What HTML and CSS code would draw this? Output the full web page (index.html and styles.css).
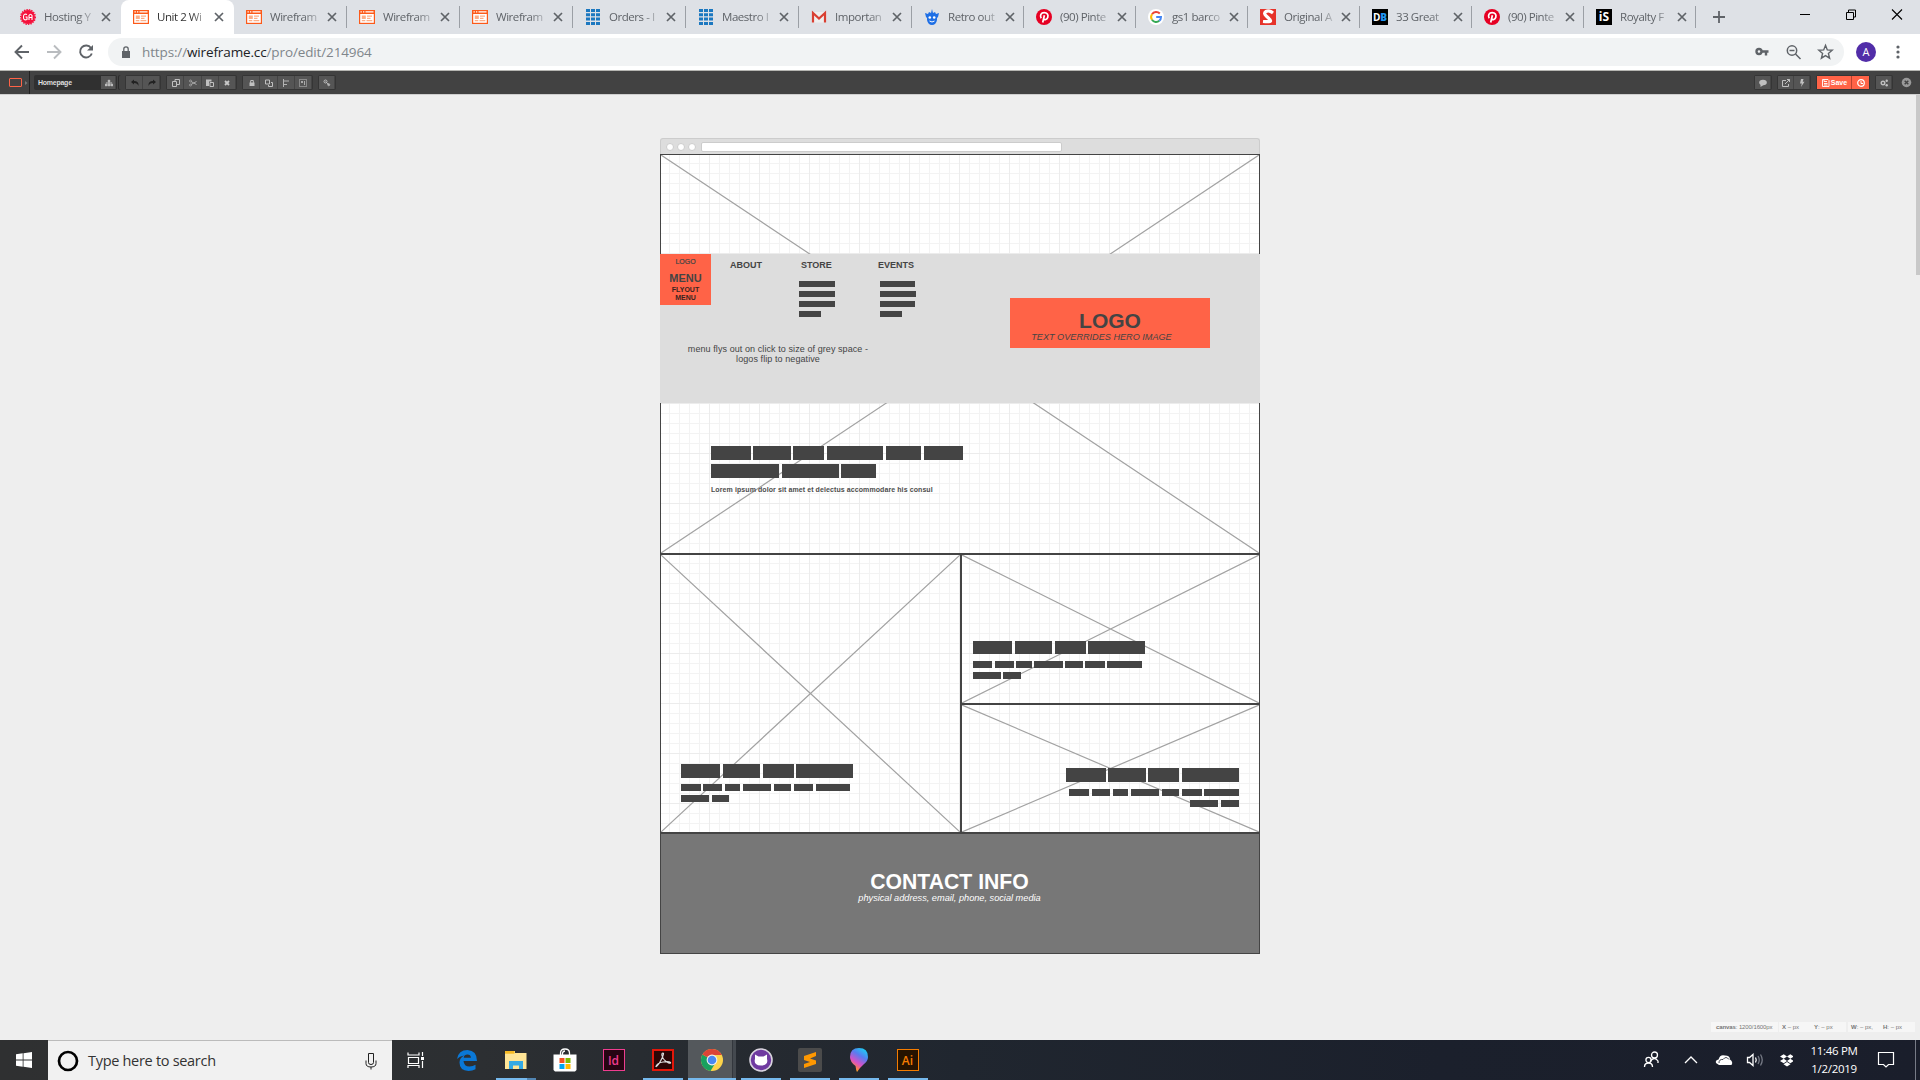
FILE: index.html
```html
<!DOCTYPE html>
<html lang="en">
<head>
<meta charset="utf-8">
<title>Unit 2 Wireframe</title>
<link rel="stylesheet" href="styles.css">
</head>
<body>
<svg class="defs" width="0" height="0">
  <symbol id="x" viewBox="0 0 10 10"><path d="M1 1L9 9M9 1L1 9" stroke="#5f6368" stroke-width="1.7"/></symbol>
  <symbol id="wf" viewBox="0 0 16 16"><path d="M0 1h16v14H0z" fill="#fc5a1a"/><path d="M1.200 5h13.600v8.800H1.200z" fill="#fff"/><path d="M1.500 2.300h1.300v1.300H1.500zM4 2.300h1.300v1.300H4zM6.500 2.300h8v1.300h-8z" fill="#fff"/><path d="M2.800 6.500h4v3.500h-4zM8 6.500h5v1.200H8zM8 8.800h3.500V10H8zM2.800 11h3.500v1.200H2.800zM7.500 11h5.800v1.200H7.500z" fill="#fcae88"/></symbol>
  <symbol id="grid" viewBox="0 0 14 16"><path d="M0 0h4v3H0zM5 0h4v3H5zM10 0h4v3h-4zM0 4.300h4v3H0zM5 4.300h4v3H5zM10 4.300h4v3h-4zM0 8.600h4v3H0zM5 8.600h4v3H5zM10 8.600h4v3h-4zM0 12.900h4v3H0zM5 12.900h4v3H5zM10 12.900h4v3h-4z" fill="#1c78c0"/></symbol>
  <symbol id="pin" viewBox="0 0 16 16"><circle cx="8" cy="8" r="8" fill="#e60023"/><path d="M5.200 9.200C3.600 6.600 5 3.700 8.200 3.700c3 0 4.300 2.100 3.600 4.600-.6 2.300-3.300 3-4.200 1.500M8.400 6.200L6.700 13.500" fill="none" stroke="#fff" stroke-width="1.700"/></symbol>
</svg>

<div class="tabs">
  <div class="tab w113"><svg class="fav" viewBox="0 0 16 16"><circle cx="8" cy="8" r="7" fill="#f5123c"/><circle cx="8" cy="8" r="7.300" fill="none" stroke="#f5123c" stroke-width="1.400" stroke-dasharray="1.500 1"/><path d="M7 5.500Q3.500 4 3.500 8t3.500 2.500V8H5.500M9 11V6.500q1.500-2.500 3 0V11M9 8.500h3" fill="none" stroke="#fff" stroke-width="1.100"/></svg><span class="title">Hosting Y</span><svg class="x"><use href="#x"/></svg></div>
  <div class="tab w113 active"><svg class="fav"><use href="#wf"/></svg><span class="title">Unit 2 Wi</span><svg class="x"><use href="#x"/></svg></div>
  <div class="tab w113 sep"><svg class="fav"><use href="#wf"/></svg><span class="title">Wirefram</span><svg class="x"><use href="#x"/></svg></div>
  <div class="tab w113 sep"><svg class="fav"><use href="#wf"/></svg><span class="title">Wirefram</span><svg class="x"><use href="#x"/></svg></div>
  <div class="tab w113 sep"><svg class="fav"><use href="#wf"/></svg><span class="title">Wirefram</span><svg class="x"><use href="#x"/></svg></div>
  <div class="tab w113 sep"><svg class="fav"><use href="#grid"/></svg><span class="title">Orders - I</span><svg class="x"><use href="#x"/></svg></div>
  <div class="tab w113 sep"><svg class="fav"><use href="#grid"/></svg><span class="title">Maestro I</span><svg class="x"><use href="#x"/></svg></div>
  <div class="tab w113 sep"><svg class="fav" viewBox="0 0 16 16"><path d="M1 3h14v10.500H1z" fill="#eee"/><path d="M2 13.500V4l6 5.500L14 4v9.500" fill="none" stroke="#d93f32" stroke-width="2.200"/></svg><span class="title">Importan</span><svg class="x"><use href="#x"/></svg></div>
  <div class="tab sep"><svg class="fav" viewBox="0 0 16 16"><path d="M1 4l3 1 1-2 2 1 1-4 1 4 2-1 1 2 3-1-1 4-1 1v2q-1 5-5 5t-5-5V9L2 8z" fill="#1f6fe5"/><circle cx="5.800" cy="8.500" r="1.300" fill="#fff"/><circle cx="10.200" cy="8.500" r="1.300" fill="#fff"/><path d="M5.500 12q2.500 2 5 0" fill="none" stroke="#fff"/></svg><span class="title">Retro out</span><svg class="x"><use href="#x"/></svg></div>
  <div class="tab sep"><svg class="fav"><use href="#pin"/></svg><span class="title">(90) Pinte</span><svg class="x"><use href="#x"/></svg></div>
  <div class="tab sep"><svg class="fav" viewBox="0 0 16 16"><circle cx="8" cy="8" r="8" fill="#fff"/><g fill="none" stroke-width="2"><path d="M4 5.200A5 5 0 0 1 11.800 4.500" stroke="#ea4335"/><path d="M4 5.200a5 5 0 0 0 0 5.600" stroke="#fbbc05"/><path d="M4 10.800a5 5 0 0 0 7.300 1" stroke="#34a853"/><path d="M11.300 11.800Q13 10.300 13 8H8.200" stroke="#4285f4"/></g></svg><span class="title">gs1 barco</span><svg class="x"><use href="#x"/></svg></div>
  <div class="tab sep"><svg class="fav" viewBox="0 0 16 16"><path d="M0 0h16v16H0z" fill="#e6332a"/><path d="M13 4Q9 .800 6 2.500T6.500 7.200t4 4.500T3 12.500" fill="none" stroke="#fff" stroke-width="3.200"/></svg><span class="title">Original A</span><svg class="x"><use href="#x"/></svg></div>
  <div class="tab sep"><span class="fav badge">D<b>B</b></span><span class="title">33 Great</span><svg class="x"><use href="#x"/></svg></div>
  <div class="tab sep"><svg class="fav"><use href="#pin"/></svg><span class="title">(90) Pinte</span><svg class="x"><use href="#x"/></svg></div>
  <div class="tab sep"><span class="fav badge is">iS</span><span class="title">Royalty F</span><svg class="x"><use href="#x"/></svg></div>
  <svg class="plus" viewBox="0 0 12 12"><path d="M6 0v12M0 6h12" stroke="#5f6368" stroke-width="1.800"/></svg>
  <svg class="winctl" viewBox="0 0 104 12"><path d="M0 6.500h10" stroke="#000"/><path d="M46.500 4.500h7v7h-7zM48.500 4.500v-2.500h7v7h-2" fill="none" stroke="#000"/><path d="M92 1.500l10 10M102 1.500l-10 10" stroke="#000" stroke-width="1.100"/></svg>
</div>

<div class="nav">
  <svg class="navicons" viewBox="0 0 108 36" fill="none" stroke-width="1.900"><path d="M29 18H16M22 11.500L15.500 18l6.500 6.500" stroke="#5f6368"/><path d="M47 18h13M54 11.500l6.500 6.500-6.500 6.500" stroke="#b9bcbf"/><path d="M91 14a6 6 0 1 0 .800 5.500" stroke="#5f6368"/><path d="M93 11v5.500h-6z" fill="#5f6368"/></svg>
  <div class="omni">
    <svg class="lock" viewBox="0 0 10 12"><path d="M1 5h8v7H1z" fill="#5f6368"/><path d="M2.800 5V3q0-2.200 2.200-2.200T7.200 3v2" fill="none" stroke="#5f6368" stroke-width="1.300"/></svg>
    <span class="url">https://<b>wireframe.cc</b>/pro/edit/214964</span>
    <svg class="omniicons" viewBox="0 0 90 28" fill="none" stroke="#5f6368" stroke-width="1.500"><circle cx="5" cy="13.500" r="2.500" stroke-width="2.400"/><path d="M8 13.500h6.500M12 13.500v4" stroke-width="2.400"/><circle cx="38" cy="12.500" r="4.700"/><path d="M41.500 16l5 5M35.500 12.500h5"/><path d="M71.500 7.300l1.800 4.600 4.900.300-3.800 3.200 1.200 4.800-4.100-2.600-4.100 2.600 1.200-4.800-3.800-3.200 4.900-.300z" stroke-width="1.400"/></svg>
  </div>
  <span class="avatar">A</span>
  <svg class="dots" viewBox="0 0 4 14" fill="#5f6368"><circle cx="2" cy="2" r="1.600"/><circle cx="2" cy="7" r="1.600"/><circle cx="2" cy="12" r="1.600"/></svg>
</div>

<div class="bar">
  <div class="shape"><i></i><svg viewBox="0 0 3 4"><path d="M0 0l2.500 2L0 4z" fill="#777"/></svg></div>
  <div class="page"><span>Homepage</span><b class="btn"><svg viewBox="0 0 8 8"><path d="M3 1h2v2H3zM0 5h2.200v2H0zM2.900 5h2.200v2H2.900zM5.800 5H8v2H5.800zM3.700 3h.600v2h-.600zM1 3.700h6v.600H1z" fill="#bbb" stroke="#bbb" stroke-width=".400"/></svg></b></div>
  <div class="group g1">
    <b class="btn"><svg viewBox="0 0 8 8"><path d="M0 3l3-2.500v1.500q5 0 4.500 5Q6.500 4 3 4v1.500z" fill="#222"/></svg></b>
    <b class="btn"><svg viewBox="0 0 8 8"><path d="M8 3L5 .500V2Q0 2 .500 7 1.500 4 5 4v1.500z" fill="#222"/></svg></b>
  </div>
  <div class="group g2">
    <b class="btn"><svg viewBox="0 0 8 8"><path d="M.500 2.500h4v5h-4zM3 2V.500h4.500v5H4.500" fill="none" stroke="#c0c0c0"/></svg></b>
    <b class="btn"><svg viewBox="0 0 8 8"><path d="M2 2.500l5.500 3M2 5.500l5.500-3" stroke="#aaa" fill="none"/><circle cx="1.500" cy="2" r="1" fill="none" stroke="#aaa" stroke-width=".800"/><circle cx="1.500" cy="6" r="1" fill="none" stroke="#aaa" stroke-width=".800"/></svg></b>
    <b class="btn"><svg viewBox="0 0 8 8"><path d="M0 .500h5.500v2H3v4.500H0z" fill="#c0c0c0"/><path d="M4 3.500h3.500v4H4z" fill="none" stroke="#c0c0c0"/></svg></b>
    <b class="btn"><svg viewBox="0 0 8 8"><path d="M2 2l4 4M6 2L2 6" stroke="#c8c8c8" stroke-width="1.800"/></svg></b>
  </div>
  <div class="group g2">
    <b class="btn"><svg viewBox="0 0 8 8"><path d="M1.500 3.500h5V7h-5z" fill="#c0c0c0"/><path d="M2.700 4V1.500h2.600V4" fill="none" stroke="#c0c0c0"/></svg></b>
    <b class="btn"><svg viewBox="0 0 8 8"><path d="M.500 1h4v4h-4zM6 3.500h1.500v4h-4V6" fill="none" stroke="#c0c0c0"/></svg></b>
    <b class="btn"><svg viewBox="0 0 8 8"><path d="M1.500 0v8M2 2h5M2 5.500h3" stroke="#b4b4b4" fill="none"/></svg></b>
    <b class="btn"><svg viewBox="0 0 8 8"><path d="M.500.500h7v7h-7z" fill="none" stroke="#c0c0c0" stroke-dasharray="1 1"/><path d="M2 2h2v2H2zM5 2h1v4H5z" fill="#aaa"/></svg></b>
  </div>
  <div class="group g2 last"><b class="btn"><svg viewBox="0 0 8 8"><path d="M2.500 2.500l3.500 3.500" stroke="#b4b4b4"/><circle cx="2.500" cy="2.500" r="1.500" fill="none" stroke="#c0c0c0"/><circle cx="5.700" cy="5.700" r="1" fill="none" stroke="#c0c0c0"/></svg></b></div>
  <div class="right">
    <div class="group"><b class="btn"><svg viewBox="0 0 8 8"><ellipse cx="4" cy="3.500" rx="3.800" ry="2.800" fill="#c0c0c0"/><path d="M1.500 5v3l3-2z" fill="#c0c0c0"/></svg></b></div>
    <div class="group"><b class="btn"><svg viewBox="0 0 8 8"><path d="M4 1.500H.500v6h6V5M3 5L7.500.500M5 .500h2.500V3" fill="none" stroke="#c0c0c0"/></svg></b><b class="btn"><svg viewBox="0 0 8 8"><path d="M3 0h2.500L4.700 2.800h1.800L3 8l.800-3.500H2z" fill="#c0c0c0"/></svg></b></div>
    <div class="group save"><b class="btn"><svg viewBox="0 0 8 8"><path d="M.500.500h5.500l1 1v6H.500zM2 1v1.500h3M2 4.500h3.500M2 6h3.500" fill="none" stroke="#fff" stroke-width=".900"/></svg>Save</b><b class="btn clock"><svg viewBox="0 0 8 8"><circle cx="4" cy="4" r="3.300" fill="none" stroke="#fff" stroke-width="1.200"/><path d="M4 2v2.500h2" fill="none" stroke="#fff"/></svg></b></div>
    <div class="group"><b class="btn"><svg viewBox="0 0 8 8"><circle cx="3" cy="4" r="1.800" fill="none" stroke="#c0c0c0" stroke-width="1.400"/><circle cx="6.700" cy="1.800" r="1.200" fill="#c0c0c0"/><circle cx="6.700" cy="6.200" r="1.200" fill="#c0c0c0"/></svg></b></div>
    <svg class="close" viewBox="0 0 12 12"><circle cx="6" cy="6" r="5.200" fill="#999"/><path d="M4 4l4 4M8 4L4 8" stroke="#424242" stroke-width="1.600"/></svg>
  </div>
</div>

<div class="work">
  <div class="frame">
    <div class="chrome"><i></i><i></i><i></i><span></span></div>
    <div class="canvas">
      <section class="cell hero">
        <svg class="cross" viewBox="0 0 100 100" preserveAspectRatio="none"><path d="M0 0L100 100M100 0L0 100"/></svg>
        <div class="fly">
          <div class="logo-sm"><span class="l1">LOGO</span><span class="l2">MENU</span><span class="l3">FLYOUT</span><span class="l3">MENU</span></div>
          <div class="col about"><h4>ABOUT</h4></div>
          <div class="col store"><h4>STORE</h4><i style="width:36px"></i><i style="width:36px"></i><i style="width:36px"></i><i style="width:22px"></i></div>
          <div class="col events"><h4>EVENTS</h4><i style="width:35px"></i><i style="width:36px"></i><i style="width:35px"></i><i style="width:22px"></i></div>
          <div class="logo-lg"><strong>LOGO</strong><em>TEXT OVERRIDES HERO IMAGE</em></div>
          <p class="note"><span>menu flys out on click to size of grey space -</span><span>logos flip to negative</span></p>
        </div>
        <div class="copy hero-copy">
          <div class="row h"><i class="n" style="width:40px"></i><i class="n" style="width:38px"></i><i style="width:31px"></i><i style="width:56px"></i><i style="width:35px"></i><i style="width:39px"></i></div>
          <div class="row h"><i style="width:68px"></i><i class="n" style="width:57px"></i><i style="width:35px"></i></div>
          <p>Lorem ipsum dolor sit amet et delectus accommodare his consul</p>
        </div>
      </section>
      <section class="cell left">
        <svg class="cross" viewBox="0 0 100 100" preserveAspectRatio="none"><path d="M0 0L100 100M100 0L0 100"/></svg>
        <div class="copy">
          <div class="row h"><i style="width:39px"></i><i style="width:37px"></i><i class="n" style="width:31px"></i><i style="width:57px"></i></div>
          <div class="row s"><i class="n" style="width:20px"></i><i style="width:19px"></i><i style="width:15px"></i><i style="width:28px"></i><i style="width:17px"></i><i style="width:19px"></i><i style="width:34px"></i></div>
          <div class="row s"><i style="width:28px"></i><i style="width:17px"></i></div>
        </div>
      </section>
      <section class="cell rt">
        <svg class="cross" viewBox="0 0 100 100" preserveAspectRatio="none"><path d="M0 0L100 100M100 0L0 100"/></svg>
        <div class="copy">
          <div class="row h"><i style="width:39px"></i><i style="width:37px"></i><i class="n" style="width:31px"></i><i style="width:57px"></i></div>
          <div class="row s"><i style="width:19px"></i><i class="n" style="width:19px"></i><i class="n" style="width:16px"></i><i class="n" style="width:29px"></i><i class="n" style="width:18px"></i><i class="n" style="width:20px"></i><i style="width:35px"></i></div>
          <div class="row s"><i class="n" style="width:28px"></i><i style="width:18px"></i></div>
        </div>
      </section>
      <section class="cell rb">
        <svg class="cross" viewBox="0 0 100 100" preserveAspectRatio="none"><path d="M0 0L100 100M100 0L0 100"/></svg>
        <div class="copy">
          <div class="row h"><i class="n" style="width:40px"></i><i class="n" style="width:38px"></i><i style="width:31px"></i><i style="width:57px"></i></div>
          <div class="row s"><i style="width:20px"></i><i style="width:18px"></i><i style="width:15px"></i><i style="width:28px"></i><i style="width:17px"></i><i class="n" style="width:20px"></i><i style="width:35px"></i></div>
          <div class="row s"><i style="width:28px"></i><i style="width:18px"></i></div>
        </div>
      </section>
      <footer><strong>CONTACT INFO</strong><em>physical address, email, phone, social media</em></footer>
    </div>
  </div>
  <div class="scroll"></div>
  <div class="status">
    <div class="a"><b>canvas</b>: 1200/1600px</div>
    <div><span><b>X</b> – px</span><span><b>Y</b>: – px</span></div>
    <div><span><b>W</b>: – px,</span><span><b>H</b>: – px</span></div>
  </div>
</div>

<div class="task">
  <div class="start"><svg width="16" height="16" viewBox="0 0 16 16"><path d="M0 2.300L6.700 1.300v6.300H0zM7.500 1.200L16 0v7.600H7.500zM0 8.400h6.700v6.300L0 13.700zM7.500 8.400H16V16l-8.500-1.200z" fill="#fff"/></svg></div>
  <div class="search"><svg width="22" height="22" viewBox="0 0 22 22"><circle cx="11" cy="11" r="9" fill="none" stroke="#000" stroke-width="2.700"/></svg><span>Type here to search</span><svg class="mic" width="12" height="18" viewBox="0 0 12 18" fill="none" stroke="#222"><path d="M3.500 1.500h5v9q0 2-2.500 2t-2.500-2zM1 8.500v3q0 3.500 5 3.500t5-3.500v-3M6 15v2.500"/></svg></div>
  <div class="apps">
    <div class="app view"><svg width="18" height="18" viewBox="0 0 18 18" fill="none" stroke="#fff" stroke-width="1.200"><path d="M1 1.500v2.500h11V1.500M1.500 6.500h10v6h-10zM1 17v-2.500h11V17M15.500 1v4M15.500 10v7"/><path d="M14 6h3v3h-3z" fill="#fff" stroke="none"/></svg></div>
    <div class="app"><svg width="22" height="22" viewBox="0 0 22 22"><path d="M1 10Q2.500 1 11.500 1 21 1.500 21 12H7.500q.500 5.500 6 5.500 3.500 0 6-1.700v4.500Q16.500 22 12.500 22 3.500 21.500 3.500 13.500 3.500 9 8 6.500 3.500 7 1 10zM7.700 8.800h7.200q-.200-3.300-3.500-3.300-3.200 0-3.700 3.300z" fill="#0a78d7"/></svg></div>
    <div class="app run two"><svg width="22" height="20" viewBox="0 0 22 20"><path d="M0 1h10v2h11.500v16H0z" fill="#ffe596"/><path d="M0 1h9.500v2.700H0z" fill="#f7ba23"/><path d="M4 19v-8h14v8h-4v-3.500H8V19z" fill="#35aae4"/></svg></div>
    <div class="app"><svg width="24" height="24" viewBox="0 0 24 24"><path d="M7.500 7V5q0-4 4.500-4t4.500 4v2M9.500 7V5Q10 3 12 3" fill="none" stroke="#fff" stroke-width="1.300"/><path d="M.500 6.500h23V22l-1.500 1.500H2L.500 22z" fill="#fff"/><path d="M6.500 10h5v5h-5z" fill="#f25022"/><path d="M12.500 10h5v5h-5z" fill="#7fba00"/><path d="M6.500 16h5v5h-5z" fill="#00a4ef"/><path d="M12.500 16h5v5h-5z" fill="#ffb900"/></svg></div>
    <div class="app"><span class="adobe id">Id</span></div>
    <div class="app run"><span class="adobe pdf"><svg width="18" height="18" viewBox="0 0 18 18"><path d="M9 2q-1.500 0-1 2.500Q9 9 14.500 12q2.500.500 2-.500Q15 10 9 11t-7 4.500Q3 16 6 11T9.500 3Q9.500 2 9 2z" fill="none" stroke="#ddd" stroke-width="1.200"/></svg></span></div>
    <div class="app run cur"><svg width="24" height="24" viewBox="0 0 24 24"><circle cx="12" cy="12" r="11" fill="#fcd34a"/><path d="M12 12L2.500 6.500A11 11 0 0 0 10.500 23L16 14z" fill="#19a15f"/><path d="M12 12L2.500 6.500A11 11 0 0 1 21.800 7H12z" fill="#dc4437"/><circle cx="12" cy="12" r="5.400" fill="#f1f1f1"/><circle cx="12" cy="12" r="4.300" fill="#4a88f0"/></svg></div>
    <div class="app run"><svg width="24" height="24" viewBox="0 0 24 24"><circle cx="12" cy="12" r="11" fill="#6f3aa0" stroke="#d9d4df" stroke-width="1.600"/><path d="M6 6.500l3.500 2h5l3.500-2v4.500q1 3-1 5-1.500 1.500-5 1.500t-5-1.500q-2-2-1-5z" fill="#fff"/></svg></div>
    <div class="app run"><svg width="24" height="24" viewBox="0 0 24 24"><rect width="24" height="24" rx="2" fill="#4b4b4b"/><path d="M6 8l12-4v4l-6 2.500 6 2V16L6 20v-4l6-2-6-2z" fill="#ff9800"/></svg></div>
    <div class="app run"><svg width="20" height="24" viewBox="0 0 20 24"><defs><linearGradient id="p3" x1=".8" y1="0" x2=".3" y2="1"><stop offset="0" stop-color="#16d5f5"/><stop offset=".35" stop-color="#5a7bf0"/><stop offset=".65" stop-color="#d552c8"/><stop offset=".85" stop-color="#fb7a50"/><stop offset="1" stop-color="#ffc400"/></linearGradient></defs><path d="M10 0q9 0 9 9 0 4-4.500 7.500Q11 19.500 8 24 7 22 6.500 18 1 14 1 9q0-9 9-9z" fill="url(#p3)"/></svg></div>
    <div class="app run"><span class="adobe ai">Ai</span></div>
  </div>
  <div class="tray">
    <svg width="150" height="24" viewBox="0 0 150 24" fill="none" stroke="#fff" stroke-width="1.300"><circle cx="11.500" cy="7" r="3"/><path d="M7.500 13q4-5 7.500 0v2"/><circle cx="5.500" cy="12" r="2.600"/><path d="M1.500 19q0-4 4-4t4 4"/><path d="M42 15l6-6 6 6"/><path d="M76 17l-3-2q-1-3 2.500-3.500Q77 6 82 7.500q5 0 5 4 3.500 2.500 1.500 5.500z" fill="#fff" stroke="none"/><path d="M76 15q0-4 4-3.500 3-4 6 0" stroke="#1b202c" stroke-width=".800"/><path d="M104.500 9.500h2l3.500-3v11l-3.500-3h-2z"/><path d="M112.500 9.500q1.500 2.500 0 5"/><path d="M115 8q2.500 4 0 8M117.500 6.500q3.500 5.500 0 11" stroke="#777b86"/><path d="M137 8.500l3.700-2.300 3.300 2.300-3.300 2.300zM144 8.500l3.300-2.300 3.700 2.300-3.700 2.300zM137 13l3.700-2.200 3.300 2.200-3.300 2.300zM144 13l3.300-2.200 3.700 2.200-3.700 2.300zM140.500 16.300l3.500-2.300 3.500 2.300-3.500 2.200z" fill="#fff" stroke="none"/></svg>
    <div class="clocktext"><span>11:46 PM</span><span>1/2/2019</span></div>
    <svg class="ac" width="18" height="18" viewBox="0 0 18 18"><path d="M1.500 1.500h15v12h-5L9 16l-2.500-2.500h-5z" fill="none" stroke="#fff" stroke-width="1.200"/></svg>
    <i class="peek"></i>
  </div>
</div>
</body>
</html>
```
FILE: styles.css
```css
* { box-sizing: border-box; }
body { margin: 0; width: 1920px; height: 1080px; overflow: hidden; display: flex; flex-direction: column; font-family: "Liberation Sans", sans-serif; background: #eee; }
svg { display: block; flex: none; }
.defs { position: absolute; }

/* browser tabs */
.tabs { display: flex; height: 34px; padding-left: 8px; background: #dee1e6; font: 11.5px "Open Sans", sans-serif; color: #5f6368; }
.tab { display: flex; align-items: center; width: 112px; height: 34px; padding: 0 0 1px 12px; flex: none; }
.w113 { width: 113px; }
.active { background: #fff; border-radius: 8px 8px 0 0; color: #333; }
.sep { border-style: solid; border-width: 0 1px 0 0; border-image: linear-gradient(#0000 7px, #9b9fa5 7px 27px, #0000 27px) 1; }
.fav { width: 16px; height: 16px; flex: none; }
.title { width: 52px; margin-left: 8px; white-space: nowrap; letter-spacing: -0.45px; -webkit-mask-image: linear-gradient(90deg, #000 65%, #0002); mask-image: linear-gradient(90deg, #000 65%, #0002); }
.x { width: 10px; height: 10px; margin-left: 4.500px; }
.badge { display: flex; align-items: center; justify-content: center; background: #000; color: #fff; font: bold 10px "Open Sans", sans-serif; }
.badge b { color: #2196f3; }
.badge.is { font-size: 12px; }
.plus { width: 12px; height: 12px; margin: 11px 0 0 17px; }
.winctl { width: 104px; height: 12px; margin: 8px 0 0 75px; }

/* address bar */
.nav { display: flex; align-items: center; height: 37px; background: #fff; border-bottom: 1px solid #b6b6b2; }
.navicons { width: 108px; height: 36px; }
.omni { display: flex; align-items: center; width: 1736px; height: 28px; padding-left: 13px; border-radius: 14px; background: #f1f3f4; }
.lock { width: 10px; height: 12px; }
.url { flex: 1; margin-left: 11px; font: 13.5px "Open Sans", sans-serif; color: #80868b; letter-spacing: -0.13px; }
.url b { font-weight: 400; color: #202124; }
.omniicons { width: 90px; height: 28px; }
.avatar { width: 20px; height: 20px; margin-left: 12px; border-radius: 50%; background: #512da8; color: #fff; font: 11px/20px "Open Sans", sans-serif; text-align: center; }
.dots { width: 4px; height: 14px; margin-left: 20px; }

/* editor toolbar */
.bar { display: flex; align-items: center; height: 23px; background: #424242; color: #ddd; font-size: 7px; flex: none; }
.shape { display: flex; align-items: center; width: 30px; height: 23px; padding-left: 9px; gap: 3px; border-right: 1px solid #222; }
.shape i { width: 13px; height: 9px; border: 1.500px solid #ff6347; border-radius: 1px; }
.shape svg { width: 3px; height: 4px; }
.page { display: flex; align-items: center; justify-content: space-between; width: 83px; height: 15px; margin-left: 4px; padding: 0 1px 0 4px; border-radius: 2px; background: #303030; font: bold 7px "Liberation Sans", sans-serif; letter-spacing: -0.25px; }
.btn { display: flex; align-items: center; justify-content: center; gap: 1px; width: 17px; height: 13px; background: #555; box-shadow: inset -1px 0 #444; }
.btn svg { width: 8px; height: 8px; }
.page .btn { width: 15px; }
.group { display: flex; padding: 1px; background: #353535; border-radius: 2px; }
.g1 { margin-left: 3px; padding: 1px; box-shadow: -6px 0 #424242, -7px 0 #2a2a2a; margin-left: 8px; }
.g2 { margin-left: 5px; }
.g2 .btn { width: 17.250px; }
.last .btn { width: 16px; }
.right { display: flex; align-items: center; gap: 5px; margin: 0 8px 0 auto; }
.right .btn { width: 16px; }
.right .save .btn { width: 35px; background: #ff6347; color: #fff; box-shadow: inset -1px 0 #b8432f; }
.right .save .clock { width: 17px; box-shadow: none; }
.close { width: 11px; height: 11px; margin-left: 3px; }

/* workspace */
.work { flex: 1; position: relative; border-top: 1px solid #cfcfcf; background: #eee; padding-top: 43px; }
.frame { width: 600px; margin: 0 auto; }
.chrome { display: flex; align-items: center; height: 16px; padding-left: 5px; border: 1px solid #ccc; border-bottom: 0; border-radius: 3px 3px 0 0; background: #ddd; }
.chrome i { width: 8px; height: 8px; margin-right: 3px; border: 1px solid #ccc; border-radius: 50%; background: #fff; }
.chrome span { width: 361px; height: 10px; margin-left: 2px; border: 1px solid #ccc; border-radius: 2px; background: #fff; }
.canvas { display: grid; grid-template: 400px 150px 129px 121px / 301px 299px; background-color: #fff;
  background-image: repeating-linear-gradient(90deg, #0000 0 49px, #ececec 49px 50px), repeating-linear-gradient(#0000 0 49px, #ececec 49px 50px), repeating-linear-gradient(90deg, #0000 0 9px, #f3f3f3 9px 10px), repeating-linear-gradient(#0000 0 9px, #f3f3f3 9px 10px); }
.cell { position: relative; border: 1px solid #444; }
.cross { position: absolute; left: 0; top: 0; width: 100%; height: 100%; }
.cross path { fill: none; stroke: #a2a2a2; stroke-width: 1.200px; vector-effect: non-scaling-stroke; }
.hero { grid-column: 1 / 3; padding-top: 99px; }
.left { grid-row: 2 / 4; padding: 209px 0 0 20px; }
.rt { padding: 86px 0 0 11px; }
.rb { padding: 63px 20px 0 0; }
.rb .row { justify-content: flex-end; }
footer { grid-column: 1 / 3; border: 1px solid #444; background: #777; color: #fff; display: flex; flex-direction: column; align-items: center; padding: 36px 21px 0 0; }
footer strong { font-size: 21.200px; line-height: 24px; }
footer em { font-size: 9.200px; line-height: 10px; margin-top: -1px; }
.copy { position: relative; }
.row { display: flex; }
.row i { background: #444; margin-right: 3px; }
.row .n { margin-right: 2px; }
.row i:last-child { margin-right: 0; }
.h { height: 14px; }
.rt .h { height: 13px; }
.s { height: 7px; margin-top: 4px; }
.h + .s { margin-top: 6px; }
.rt .h + .s, .rb .h + .s { margin-top: 7px; }
.hero-copy { padding: 43px 0 0 50px; }
.hero-copy .h + .h { margin-top: 4px; }
.hero-copy p { margin: 7px 0 0; font: bold 7px/10px "Liberation Sans", sans-serif; letter-spacing: 0.09px; color: #4c4c4c; white-space: nowrap; }

/* flyout menu over the hero */
.fly { position: relative; display: grid; grid-template: 51px 98px / 51px 74px 81px 144px 200px; width: 600px; height: 149px; margin-left: -1px; background: #ddd; color: #444; }
.logo-sm { display: flex; flex-direction: column; align-items: center; background: #ff6347; font-weight: bold; }
.l1 { font-size: 7px; line-height: 8px; margin-top: 4px; font-weight: 400; -webkit-text-stroke: 0.2px #444; }
.l2 { font-size: 11px; line-height: 12px; margin: 6px 0 2px; }
.l3 { font-size: 7px; line-height: 8px; color: #3a2420; }
.col { display: flex; flex-direction: column; gap: 4px; }
.col h4 { margin: 5px 0 6px; font-size: 9px; line-height: 12px; height: 12px; }
.col i { height: 6px; background: #444; flex: none; }
.about { padding-left: 19px; }
.store { padding-left: 14px; }
.store h4 { margin-left: 2px; }
.events { padding-left: 14px; }
.events h4 { margin-left: -2px; }
.logo-lg { grid-row: 1 / 3; height: 50px; margin-top: 44px; padding-top: 12px; background: #ff6347; display: flex; flex-direction: column; align-items: center; }
.logo-lg strong { font-size: 21px; line-height: 22px; }
.logo-lg em { margin-right: 17px; font-size: 9.150px; line-height: 10px; white-space: nowrap; }
.note { grid-area: 2 / 1 / 3 / 5; width: 184px; margin: 39px 0 0 26px; font-size: 9px; letter-spacing: 0.08px; line-height: 10px; text-align: center; display: flex; flex-direction: column; white-space: nowrap; }

.scroll { position: absolute; right: 0; top: 0; width: 4px; height: 180px; background: #c8c8c8; }
.status { position: absolute; right: 5px; bottom: 8px; display: flex; gap: 1px; color: #777; font: 6px/10px "Liberation Sans", sans-serif; }
.status div { display: flex; width: 67px; height: 10px; padding-left: 3px; background: #f6f6f6; white-space: pre; }
.status .a { padding-left: 5px; letter-spacing: -0.1px; }
.status div:last-child { margin-left: 1px; }
.status span { width: 33px; }

/* system taskbar */
.task { display: flex; height: 40px; flex: none; background: linear-gradient(90deg, #2f3031 0, #2c2f32 25%, #20262f 50%, #1b202c 75%, #1a1e2b); color: #fff; }
.start { display: flex; width: 48px; align-items: center; justify-content: center; }
.search { display: flex; align-items: center; width: 344px; padding-left: 9px; background: #f1f1f1; border-top: 1px solid #bbb; color: #333; font: 14.500px "Open Sans", sans-serif; }
.search span { margin-left: 9px; letter-spacing: -0.3px; }
.mic { margin: 0 15px 0 auto; }
.apps { display: flex; padding-left: 1px; }
.app { display: flex; width: 49px; align-items: center; justify-content: center; position: relative; }
.view { padding-right: 3px; }
.run::after { content: ""; position: absolute; left: 4.500px; width: 40px; bottom: 0; height: 2px; background: #76b9ed; }
.two::after { background: linear-gradient(90deg, #76b9ed 31px, #5286b3 31px); }
.cur { background: linear-gradient(90deg, #0000 1px, #54585c 1px 45px, #33373d 45px 46px, #44494f 46px); }
.cur::after { left: 1px; width: 48px; }
.adobe { display: flex; align-items: center; justify-content: center; width: 22px; height: 22px; border: 1.500px solid; font: 600 12px "Open Sans", sans-serif; }
.id { color: #ee3d8f; background: #270513; }
.pdf { color: #e3170a; background: #2a0606; border-width: 2px; }
.ai { color: #f57c00; background: #261300; }
.tray { display: flex; align-items: center; margin-left: auto; }
.clocktext { display: flex; flex-direction: column; align-items: center; width: 60px; margin-left: 11px; font: 11.500px/18px "Open Sans", sans-serif; letter-spacing: -0.3px; }
.ac { margin-left: 13px; }
.peek { width: 1px; height: 40px; margin: 0 4px 0 20px; background: #777b86; }
```
